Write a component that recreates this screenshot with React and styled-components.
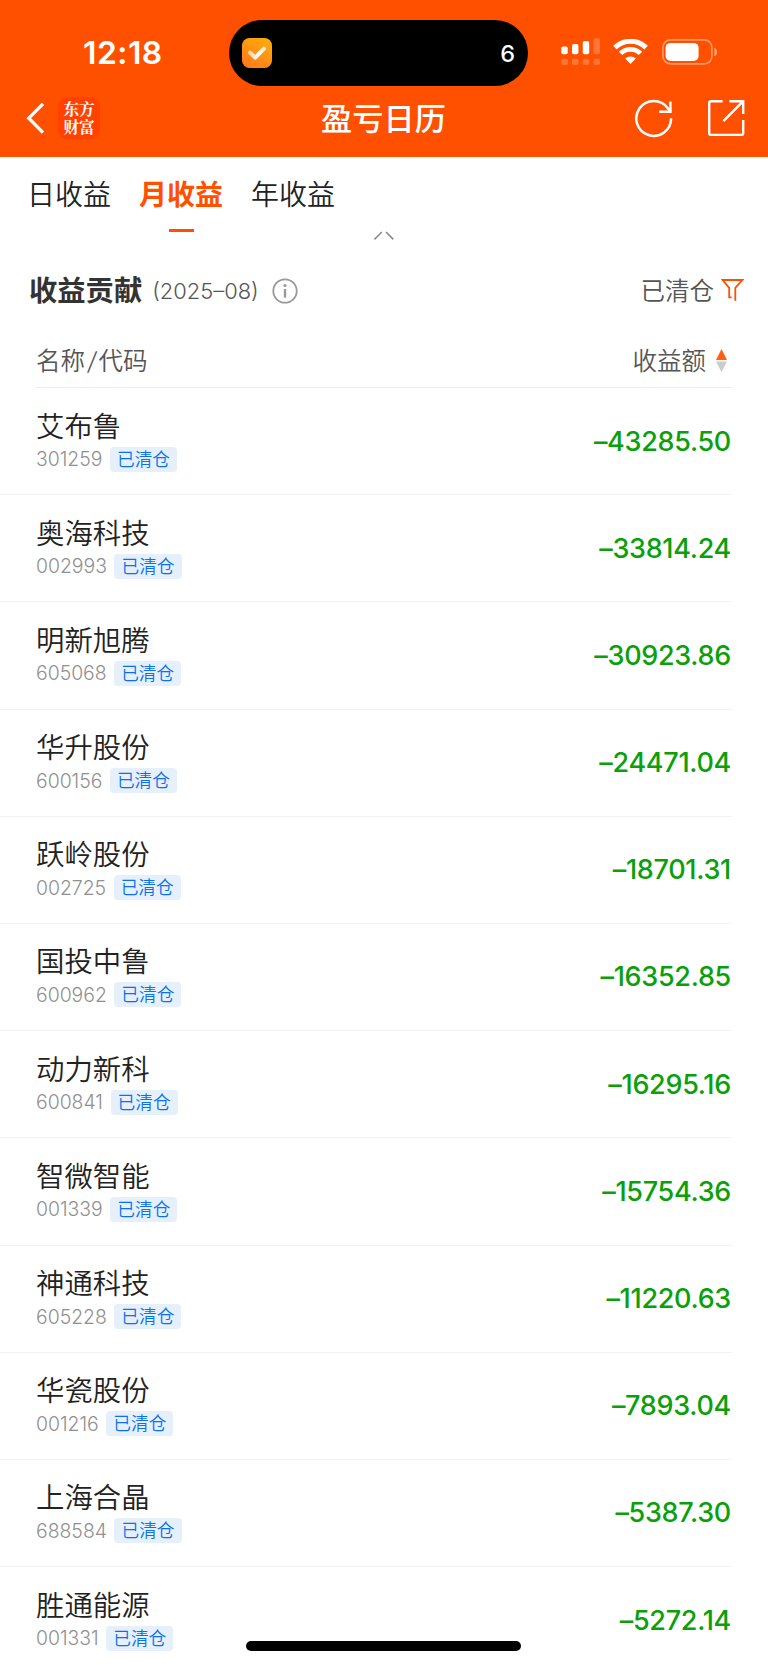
import React from 'react'
import styled, { createGlobalStyle } from 'styled-components'

const stocks = [
    { name: '艾布鲁', code: '301259', amount: '–43285.50' },
    { name: '奥海科技', code: '002993', amount: '–33814.24' },
    { name: '明新旭腾', code: '605068', amount: '–30923.86' },
    { name: '华升股份', code: '600156', amount: '–24471.04' },
    { name: '跃岭股份', code: '002725', amount: '–18701.31' },
    { name: '国投中鲁', code: '600962', amount: '–16352.85' },
    { name: '动力新科', code: '600841', amount: '–16295.16' },
    { name: '智微智能', code: '001339', amount: '–15754.36' },
    { name: '神通科技', code: '605228', amount: '–11220.63' },
    { name: '华瓷股份', code: '001216', amount: '–7893.04' },
    { name: '上海合晶', code: '688584', amount: '–5387.30' },
    { name: '胜通能源', code: '001331', amount: '–5272.14' },
]

const tabs = ['日收益', '月收益', '年收益']

export default () => {
    return (
        <Screen>
            <GlobalStyle />
            <Header>
                <StatusBar />
                <NavBar title="盈亏日历" />
            </Header>
            <Tabs>
                {tabs.map(tab => <Tab key={tab} $active={tab === '月收益'}>{tab}</Tab>)}
            </Tabs>
            <Collapse>
                <svg width="22" height="10" viewBox="0 0 22 10" fill="none" stroke="#888" strokeWidth="1.5">
                    <path d="M1.5 8.4 L8.8 1 M13 1 L20.3 8.4" />
                </svg>
            </Collapse>
            <Section>
                <SectionTitle>收益贡献</SectionTitle>
                <Period>(2025–08)</Period>
                <InfoIcon />
                <Filter>已清仓<FilterIcon /></Filter>
            </Section>
            <TableHead>
                <div>名称<Slash>/</Slash>代码</div>
                <Sort>收益额<SortIcon /></Sort>
            </TableHead>
            {stocks.map(stock => <Stock key={stock.code} {...stock} />)}
            <HomeIndicator />
        </Screen>
    )
}

const StatusBar = () => (
    <StatusWrapper>
        <Time>12:18</Time>
        <Island>
            <svg width="30" height="30" viewBox="0 0 30 30" fill="none">
                <defs>
                    <linearGradient id="app" x1="0.8" y1="0" x2="0.2" y2="1">
                        <stop offset="0" stopColor="#ffac0c" />
                        <stop offset="1" stopColor="#ff7a1a" />
                    </linearGradient>
                    <linearGradient id="tick" x1="0" y1="0" x2="1" y2="0">
                        <stop offset="0" stopColor="#ffd0a0" />
                        <stop offset="0.5" stopColor="#fff" />
                        <stop offset="1" stopColor="#ffe9cf" />
                    </linearGradient>
                </defs>
                <rect width="30" height="30" rx="7.5" fill="url(#app)" />
                <path d="M8 14.6 L13.2 19.6 L22 10.6" stroke="url(#tick)" strokeWidth="4" strokeLinecap="round" strokeLinejoin="round" />
            </svg>
            <span>6</span>
        </Island>
        <Indicators>
            <svg width="40" height="28" viewBox="0 0 40 28" fill="#fff">
                <rect x="0.3" y="8.4" width="6.4" height="7.8" rx="1.8" />
                <rect x="11" y="6" width="6.4" height="10.2" rx="1.8" />
                <rect x="21.8" y="3" width="6.4" height="13.2" rx="1.8" />
                <g opacity="0.22">
                    <rect x="32.5" y="0.2" width="6.4" height="16" rx="1.8" />
                    <rect x="0.3" y="20.8" width="6.4" height="6.2" rx="1.8" />
                    <rect x="11" y="20.8" width="6.4" height="6.2" rx="1.8" />
                    <rect x="21.8" y="20.8" width="6.4" height="6.2" rx="1.8" />
                    <rect x="32.5" y="20.8" width="6.4" height="6.2" rx="1.8" />
                </g>
            </svg>
            <svg width="35" height="25" viewBox="0 0 35 25" fill="none" stroke="#fff">
                <path d="M1.9 8.6 A22.3 22.3 0 0 1 33.1 8.6" strokeWidth="5" />
                <path d="M7.5 14.4 A14.2 14.2 0 0 1 27.5 14.4" strokeWidth="4.8" />
                <path d="M17.5 25 L12.2 19.6 A7.6 7.6 0 0 1 22.8 19.6 Z" fill="#fff" stroke="none" />
            </svg>
            <svg width="56" height="26" viewBox="0 0 56 26" fill="none">
                <rect x="0.9" y="0.9" width="49" height="24" rx="7.6" stroke="#fff" strokeOpacity="0.42" strokeWidth="1.6" />
                <rect x="3.6" y="3.9" width="33" height="18" rx="5" fill="#fff" />
                <path d="M52.3 8.8 C56.1 10.2 56.1 15.6 52.3 17 Z" fill="#fff" fillOpacity="0.45" />
            </svg>
        </Indicators>
    </StatusWrapper>
)

const NavBar = ({ title }) => (
    <NavWrapper>
        <NavSide>
            <svg width="20" height="34" viewBox="0 0 20 34" fill="none" stroke="#fff" strokeWidth="3.3">
                <path d="M18 2.8 L3.8 17.2 L18 31.6" />
            </svg>
            <Logo>
                <span>东方</span>
                <span>财富</span>
            </Logo>
        </NavSide>
        <Title>{title}</Title>
        <NavSide $end>
            <svg width="38" height="39" viewBox="0 0 38 39" fill="none" stroke="#fff" strokeWidth="2.5">
                <path d="M36.1 19.2 A17.4 17.4 0 1 1 32.8 9.2 L35.6 12.6" />
                <path d="M35.4 2.4 V12.8 H24.2" />
            </svg>
            <svg width="38" height="38" viewBox="0 0 38 38" fill="none" stroke="#fff" strokeWidth="2.4">
                <path d="M15.6 2.2 H4 Q2.2 2.2 2.2 4 V34 Q2.2 35.9 4 35.9 H34.4 Q36.2 35.9 36.2 34 V21" />
                <path d="M22.4 2.2 H36.2 V15 M36.2 2.2 L16.4 22.2" />
            </svg>
        </NavSide>
    </NavWrapper>
)

const InfoIcon = () => (
    <svg width="26" height="26" viewBox="0 0 26 26" fill="none" stroke="#999" strokeWidth="1.8">
        <circle cx="13" cy="13" r="11.7" />
        <path d="M13 11 V19.6" strokeWidth="2.4" />
        <circle cx="13" cy="7.5" r="1.6" fill="#999" stroke="none" />
    </svg>
)

const FilterIcon = () => (
    <svg width="23" height="24" viewBox="0 0 23 24" fill="none" stroke="#ff5000" strokeWidth="1.8">
        <path d="M10.6 19.4 H8.2 V9.9 L1.6 2 H21.4 L14.3 9.9 V22.8" />
    </svg>
)

const SortIcon = () => (
    <svg width="11" height="23" viewBox="0 0 11 23">
        <path d="M5.5 0 L11 11 H0 Z" fill="#ff6010" />
        <path d="M5.5 23 L11 12.6 H0 Z" fill="#ccc" />
    </svg>
)

const Stock = ({ name, code, amount }) => (
    <StockRow>
        <div>
            <Name>{name}</Name>
            <Code>{code}<Tag>已清仓</Tag></Code>
        </div>
        <Amount>{amount}</Amount>
    </StockRow>
)

const GlobalStyle = createGlobalStyle`
    body{
        margin:0;
        background:#fff;
    }
    *{
        box-sizing:border-box;
    }
    svg{
        display:block;
        flex:none;
    }
`

const Screen = styled.div`
    width:768px;
    height:1665px;
    overflow:hidden;
    position:relative;
    background:#fff;
    color:#333;
    font-family:Inter, "Noto Sans CJK SC", sans-serif;
    white-space:nowrap;
`

const Header = styled.div`
    height:157px;
    background:#ff5000;
    color:#fff;
`

const StatusWrapper = styled.div`
    display:grid;
    grid-template-columns:229px 299px 240px;
    height:86px;
    padding-top:20px;
`

const Time = styled.div`
    padding-left:83px;
    font-size:31.8px;
    font-weight:600;
    line-height:65px;
    letter-spacing:0.5px;
`

const Island = styled.div`
    display:flex;
    align-items:center;
    justify-content:space-between;
    padding:0 13px;
    border-radius:33px;
    background:#000;
    font-size:23.5px;
    font-weight:500;
    svg{
        margin-top:-1px;
    }
`

const Indicators = styled.div`
    display:flex;
    padding:18px 0 0 33px;
    svg:nth-child(2){
        margin:1px 0 0 12px;
    }
    svg:nth-child(3){
        margin:1px 0 0 14px;
    }
`

const NavWrapper = styled.div`
    display:grid;
    grid-template-columns:1fr auto 1fr;
    align-items:center;
    height:64px;
    padding:0 23px 0 25px;
`

const NavSide = styled.div`
    display:flex;
    align-items:center;
    gap:${props => props.$end ? '34px' : '13px'};
    justify-content:${props => props.$end ? 'flex-end' : 'flex-start'};
`

const Logo = styled.div`
    display:flex;
    flex-direction:column;
    align-items:center;
    justify-content:center;
    width:42px;
    height:42px;
    padding-top:2px;
    border-radius:9px;
    background:#ff4200;
    font-family:"Liberation Serif", "Noto Serif CJK SC", "Noto Sans CJK SC", serif;
    font-size:15.6px;
    font-weight:700;
    line-height:18px;
`

const Title = styled.div`
    margin-right:3px;
    padding-top:1px;
    font-size:31.2px;
    font-weight:500;
    line-height:44px;
`

const Tabs = styled.div`
    display:flex;
    gap:28px;
    height:74px;
    padding:16px 0 0 27px;
`

const Tab = styled.div`
    display:flex;
    flex-direction:column;
    align-items:center;
    font-size:28px;
    line-height:44px;
    font-weight:${props => props.$active ? 700 : 350};
    color:${props => props.$active ? '#ff5000' : '#222'};
    &::after{
        content:'';
        flex:none;
        width:25px;
        height:3px;
        margin-top:12px;
        background:${props => props.$active ? '#ff5000' : 'transparent'};
    }
`

const Collapse = styled.div`
    display:flex;
    justify-content:center;
    height:24px;
`

const Section = styled.div`
    display:flex;
    align-items:center;
    height:71px;
    padding:0 24px 0 29px;
    svg{
        margin-top:1px;
    }
`

const SectionTitle = styled.div`
    margin-top:-4px;
    font-size:28.3px;
    font-weight:700;
`

const Period = styled.div`
    margin:0 13px 0 10px;
    font-size:21.9px;
    font-weight:300;
    color:#555;
`

const Filter = styled.div`
    display:flex;
    align-items:center;
    gap:7px;
    margin:-2px 0 0 auto;
    font-size:24.5px;
    font-weight:350;
    color:#555;
`

const TableHead = styled.div`
    display:flex;
    align-items:center;
    justify-content:space-between;
    height:62px;
    margin:0 36px;
    padding-top:6px;
    border-bottom:1px solid #eee;
    font-size:24.5px;
    font-weight:350;
    color:#555;
`

const Slash = styled.span`
    display:inline-block;
    padding:0 2px 0 3px;
    font-weight:300;
    transform:skewX(-8deg);
`

const Sort = styled.div`
    display:flex;
    align-items:center;
    gap:10px;
    padding-right:5px;
    svg{
        margin-top:1px;
    }
`

const StockRow = styled.div`
    display:flex;
    justify-content:space-between;
    height:107.2px;
    margin-right:36px;
    padding:17.5px 0 0 36px;
    border-bottom:1px solid #f2f2f2;
`

const Name = styled.div`
    font-size:28.4px;
    font-weight:350;
    line-height:41px;
    color:#222;
`

const Code = styled.div`
    display:flex;
    align-items:center;
    gap:7.5px;
    height:25px;
    font-size:19.4px;
    font-weight:300;
    color:#909090;
`

const Tag = styled.span`
    padding:0 7px;
    border-radius:4px;
    background:#e6f0fb;
    color:#0a70ee;
    font-size:17.7px;
    font-weight:350;
    line-height:25px;
`

const Amount = styled.div`
    padding-right:1px;
    font-size:27px;
    font-weight:500;
    line-height:71px;
    letter-spacing:-0.3px;
    color:#0aa00a;
`

const HomeIndicator = styled.div`
    position:absolute;
    left:246px;
    bottom:14px;
    width:275px;
    height:10px;
    border-radius:5px;
    background:#000;
`
